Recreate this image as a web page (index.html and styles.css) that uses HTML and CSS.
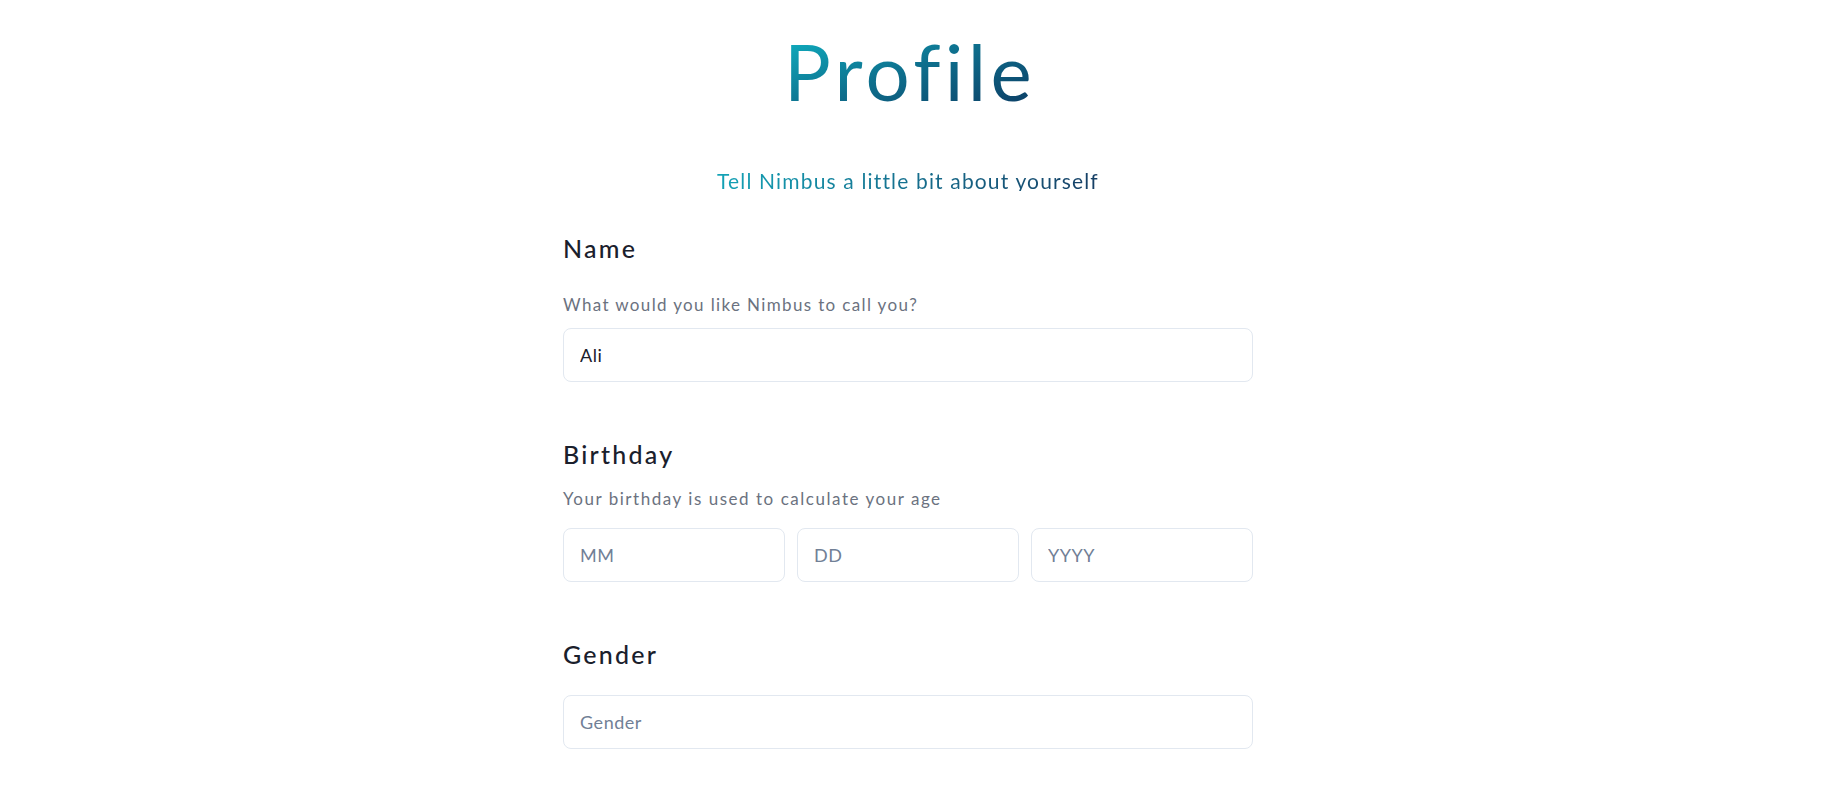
FILE: index.html
```html
<!DOCTYPE html>
<html lang="en">
<head>
<meta charset="utf-8">
<title>Profile</title>
<link rel="stylesheet" href="styles.css">
</head>
<body>
<main class="page">
  <header class="intro">
    <h1 class="title">Profile</h1>
    <p class="subtitle">Tell Nimbus a little bit about yourself</p>
  </header>
  <form class="form">
    <section class="field field--name">
      <h2 class="field-label">Name</h2>
      <p class="field-hint">What would you like Nimbus to call you?</p>
      <input class="text-input" type="text" value="Ali">
    </section>
    <section class="field field--birthday">
      <h2 class="field-label">Birthday</h2>
      <p class="field-hint field-hint--wide">Your birthday is used to calculate your age</p>
      <div class="date-row">
        <input class="text-input" type="text" placeholder="MM">
        <input class="text-input" type="text" placeholder="DD">
        <input class="text-input" type="text" placeholder="YYYY">
      </div>
    </section>
    <section class="field field--gender">
      <h2 class="field-label">Gender</h2>
      <input class="text-input" type="text" placeholder="Gender">
    </section>
  </form>
</main>
</body>
</html>
```

FILE: styles.css
```css
* { box-sizing: border-box; }

html, body {
  margin: 0;
  background: #ffffff;
}

body {
  font-family: "Lato", "Noto Sans", sans-serif;
  font-variant-ligatures: none;
  color: #1a202c;
  padding-right: 27px;
}

.page {
  width: 690px;
  margin: 0 auto;
}

.intro {
  display: flex;
  flex-direction: column;
  align-items: center;
}

.title {
  margin: 32px 0 0;
  padding-left: 4px;
  font-size: 78px;
  line-height: 78px;
  font-weight: 400;
  letter-spacing: 0.055em;
  background: linear-gradient(160deg, #0fb4c4 0%, #0e6e8c 50%, #0c3b63 100%);
  -webkit-background-clip: text;
  background-clip: text;
  color: transparent;
}

.subtitle {
  margin: 60px 0 0;
  font-size: 21px;
  line-height: 21px;
  letter-spacing: 0.055em;
  background: linear-gradient(100deg, #13a3b6 0%, #16708f 50%, #163e64 100%);
  -webkit-background-clip: text;
  background-clip: text;
  color: transparent;
}

.form {
  display: flex;
  flex-direction: column;
}

.field {
  display: flex;
  flex-direction: column;
}

.field-label {
  margin: 0;
  font-size: 25px;
  line-height: 25px;
  font-weight: 500;
  letter-spacing: 0.09em;
  color: #1a202c;
}

.field-hint {
  margin: 0;
  font-size: 17px;
  line-height: 17px;
  letter-spacing: 0.08em;
  color: #6b7280;
}

.field-hint--wide { letter-spacing: 0.09em; }

.field--name { margin-top: 45px; }
.field--name .field-hint { margin-top: 35px; margin-bottom: 15px; }

.field--birthday { margin-top: 60px; }
.field--birthday .field-hint { margin-top: 23px; margin-bottom: 21px; }

.field--gender { margin-top: 60px; }
.field--gender .field-label { margin-bottom: 28px; }

.text-input {
  width: 100%;
  height: 54px;
  padding: 0 16px;
  border: 1px solid #e2e8f0;
  border-radius: 8px;
  background: #ffffff;
  font-family: inherit;
  font-size: 18px;
  letter-spacing: 0.03em;
  color: #1a202c;
  outline: none;
}

.text-input::placeholder {
  color: #718096;
  opacity: 1;
}

.date-row {
  display: grid;
  grid-template-columns: repeat(3, 1fr);
  gap: 12px;
}
```
